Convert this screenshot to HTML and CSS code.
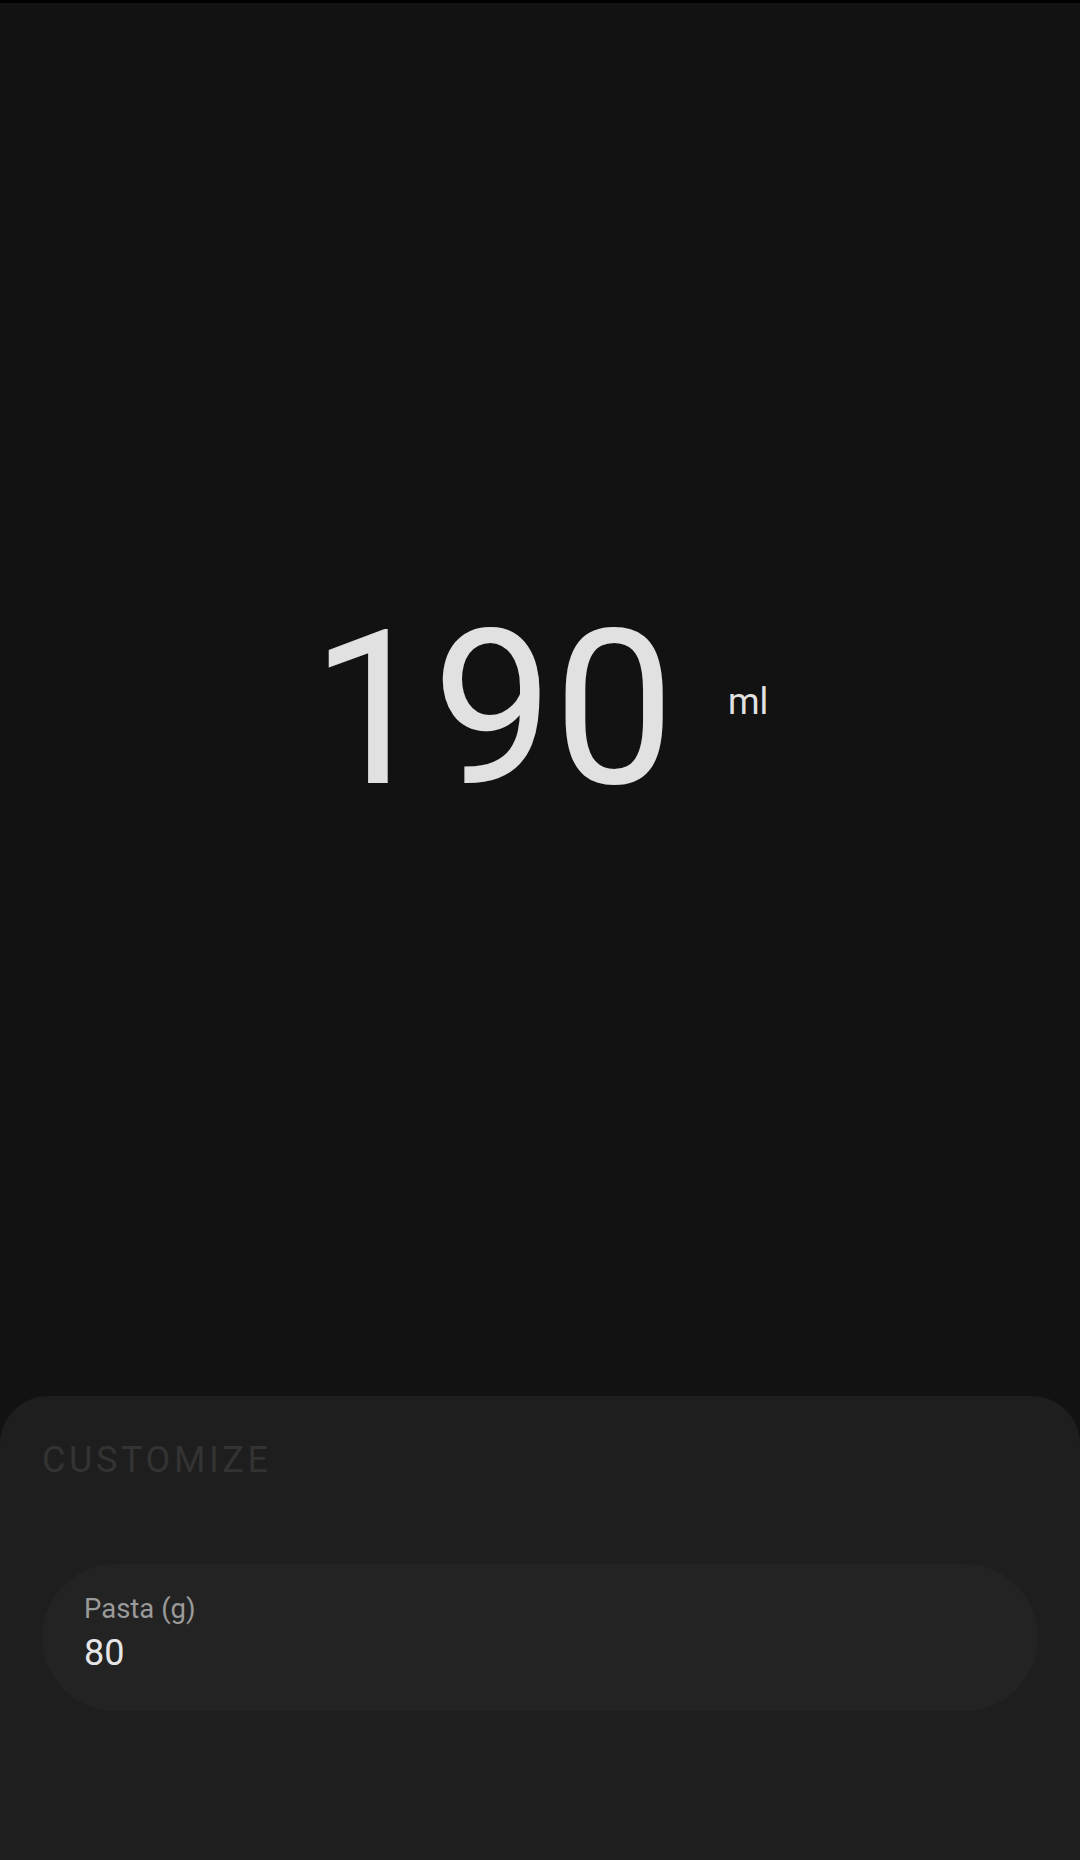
FILE: index.html
```html
<!DOCTYPE html>
<html lang="en">
<head>
<meta charset="utf-8">
<title>Water calculator</title>
<link rel="stylesheet" href="styles.css">
</head>
<body>
<div class="app">
  <div class="status"></div>
  <main class="display">
    <div class="reading">
      <span class="value">190</span>
      <span class="unit">ml</span>
    </div>
  </main>
  <section class="sheet">
    <h2 class="sheet-title">CUSTOMIZE</h2>
    <div class="field">
      <div class="field-label">Pasta (g)</div>
      <div class="field-value">80</div>
    </div>
  </section>
</div>
</body>
</html>
```

FILE: styles.css
```css
* { box-sizing: border-box; }
html, body {
  margin: 0;
  padding: 0;
  background: #121212;
}
body {
  font-family: Roboto, "Noto Sans", sans-serif;
  width: 1080px;
  height: 1860px;
  overflow: hidden;
}
.app {
  display: flex;
  flex-direction: column;
  height: 1860px;
}
.status {
  height: 3px;
  background: #000;
  flex: none;
}
.display {
  flex: 1;
  display: flex;
  align-items: center;
  justify-content: center;
  padding-top: 21px;
  padding-right: 1px;
}
.reading {
  display: flex;
  align-items: center;
}
.value {
  font-size: 216px;
  line-height: 1;
  font-weight: 400;
  color: #e1e1e1;
}
.unit {
  font-size: 36px;
  line-height: 1;
  color: #e1e1e1;
  margin-left: 53px;
  margin-bottom: 16px;
}
.sheet {
  flex: none;
  height: 464px;
  background: #1e1e1e;
  border-radius: 48px 48px 0 0;
  padding: 43px 42px 0 42px;
}
.sheet-title {
  margin: 0;
  font-size: 36px;
  line-height: 42px;
  font-weight: 400;
  letter-spacing: 3.6px;
  color: #333333;
}
.field {
  margin-top: 83px;
  height: 147px;
  background: #232323;
  border-radius: 74px;
  padding: 29px 43px 0 42px;
}
.field-label {
  font-size: 27.5px;
  line-height: 32px;
  color: #9a9a9a;
}
.field-value {
  margin-top: 7px;
  font-size: 36px;
  line-height: 42px;
  color: #e6e6e6;
}
```
